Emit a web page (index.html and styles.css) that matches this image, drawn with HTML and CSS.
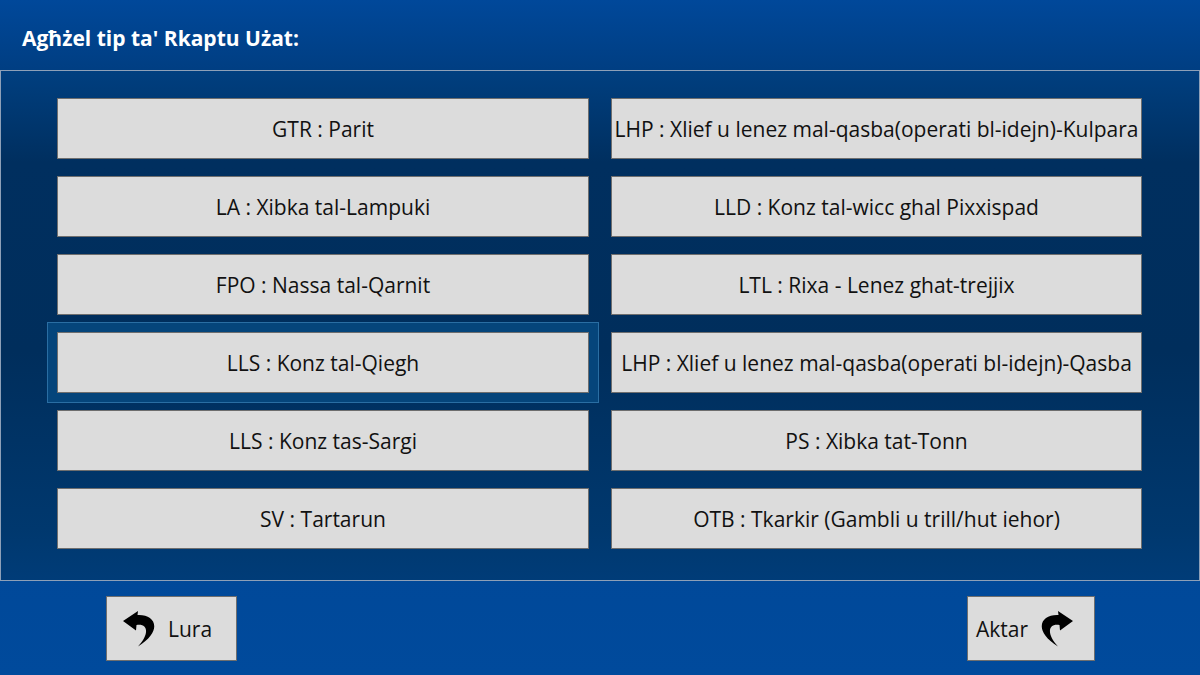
FILE: index.html
```html
<!DOCTYPE html>
<html lang="mt">
<head>
    <meta charset="UTF-8">
    <title>Rkaptu Użat</title>
    <link rel="stylesheet" href="styles.css">
</head>
<body>
    <div id="screen">
        <div id="header">Agħżel tip ta' Rkaptu Użat:</div>

        <div id="panel">
            <div id="choice-grid">
                <button class="choice">GTR : Parit</button>
                <button class="choice">LHP : Xlief u lenez mal-qasba(operati bl-idejn)-Kulpara</button>
                <button class="choice">LA : Xibka tal-Lampuki</button>
                <button class="choice">LLD : Konz tal-wicc ghal Pixxispad</button>
                <button class="choice">FPO : Nassa tal-Qarnit</button>
                <button class="choice">LTL : Rixa - Lenez ghat-trejjix</button>
                <button class="choice focused">LLS : Konz tal-Qiegh</button>
                <button class="choice">LHP : Xlief u lenez mal-qasba(operati bl-idejn)-Qasba</button>
                <button class="choice">LLS : Konz tas-Sargi</button>
                <button class="choice">PS : Xibka tat-Tonn</button>
                <button class="choice">SV : Tartarun</button>
                <button class="choice">OTB : Tkarkir (Gambli u trill/hut iehor)</button>
            </div>
        </div>

        <div id="footer">
            <button class="nav-button" id="back-button">
                <svg class="arrow" viewBox="0 0 36 37" width="36" height="37">
                    <path d="M1 11 L16 1 L15.5 5 C33 4 42 20 16 36.5 C27 25 27 13 14.5 15 L14 20.5 Z" fill="#000"/>
                </svg>
                <span>Lura</span>
            </button>
            <button class="nav-button" id="next-button">
                <span>Aktar</span>
                <svg class="arrow flip" viewBox="0 0 36 37" width="36" height="37">
                    <path d="M1 11 L16 1 L15.5 5 C33 4 42 20 16 36.5 C27 25 27 13 14.5 15 L14 20.5 Z" fill="#000"/>
                </svg>
            </button>
        </div>
    </div>
</body>
</html>
```

FILE: styles.css
```css
body {
    margin: 0;
    font-family: 'Open Sans', 'Noto Sans', sans-serif;
}

#screen {
    width: 1200px;
    height: 675px;
    display: flex;
    flex-direction: column;
    background: linear-gradient(to bottom, #00408a 0%, #004a9c 100%);
    overflow: hidden;
}

#header {
    height: 70px;
    box-sizing: border-box;
    padding: 24px 0 0 22px;
    font-size: 21px;
    font-weight: bold;
    color: #ffffff;
    background: linear-gradient(to bottom, #00489a 0%, #003e82 100%);
}

#panel {
    height: 511px;
    box-sizing: border-box;
    border: 1px solid #8da0b8;
    padding: 27px 56px 0 56px;
    background: linear-gradient(to bottom, #003f80 0%, #002f5f 18%, #002e5c 55%, #00386e 90%, #003c78 100%);
}

#choice-grid {
    display: grid;
    grid-template-columns: 532px 531px;
    grid-auto-rows: 61px;
    column-gap: 22px;
    row-gap: 17px;
}

.choice {
    margin: 0;
    padding: 0 2px;
    border: 1px solid #6e6e6e;
    background: #dcdcdc;
    font-family: 'Open Sans', 'Noto Sans', sans-serif;
    font-size: 21px;
    color: #111111;
    white-space: nowrap;
    overflow: hidden;
    cursor: pointer;
}

.choice.focused {
    box-shadow: 0 0 0 9px #05457b, 0 0 0 10px #2a6ea3;
}

#footer {
    flex: 1;
    display: flex;
    justify-content: space-between;
    align-items: flex-start;
    padding: 15px 105px 0 106px;
}

.nav-button {
    height: 65px;
    margin: 0;
    display: flex;
    align-items: center;
    border: 1px solid #6e6e6e;
    background: #dcdcdc;
    font-family: 'Open Sans', 'Noto Sans', sans-serif;
    font-size: 21px;
    color: #111111;
    cursor: pointer;
}

#back-button {
    width: 131px;
    padding: 0 0 0 15px;
    gap: 10px;
}

#next-button {
    width: 128px;
    padding: 0 0 0 8px;
    gap: 10px;
}

.arrow {
    flex: none;
}

.arrow.flip {
    transform: scaleX(-1);
}
```
